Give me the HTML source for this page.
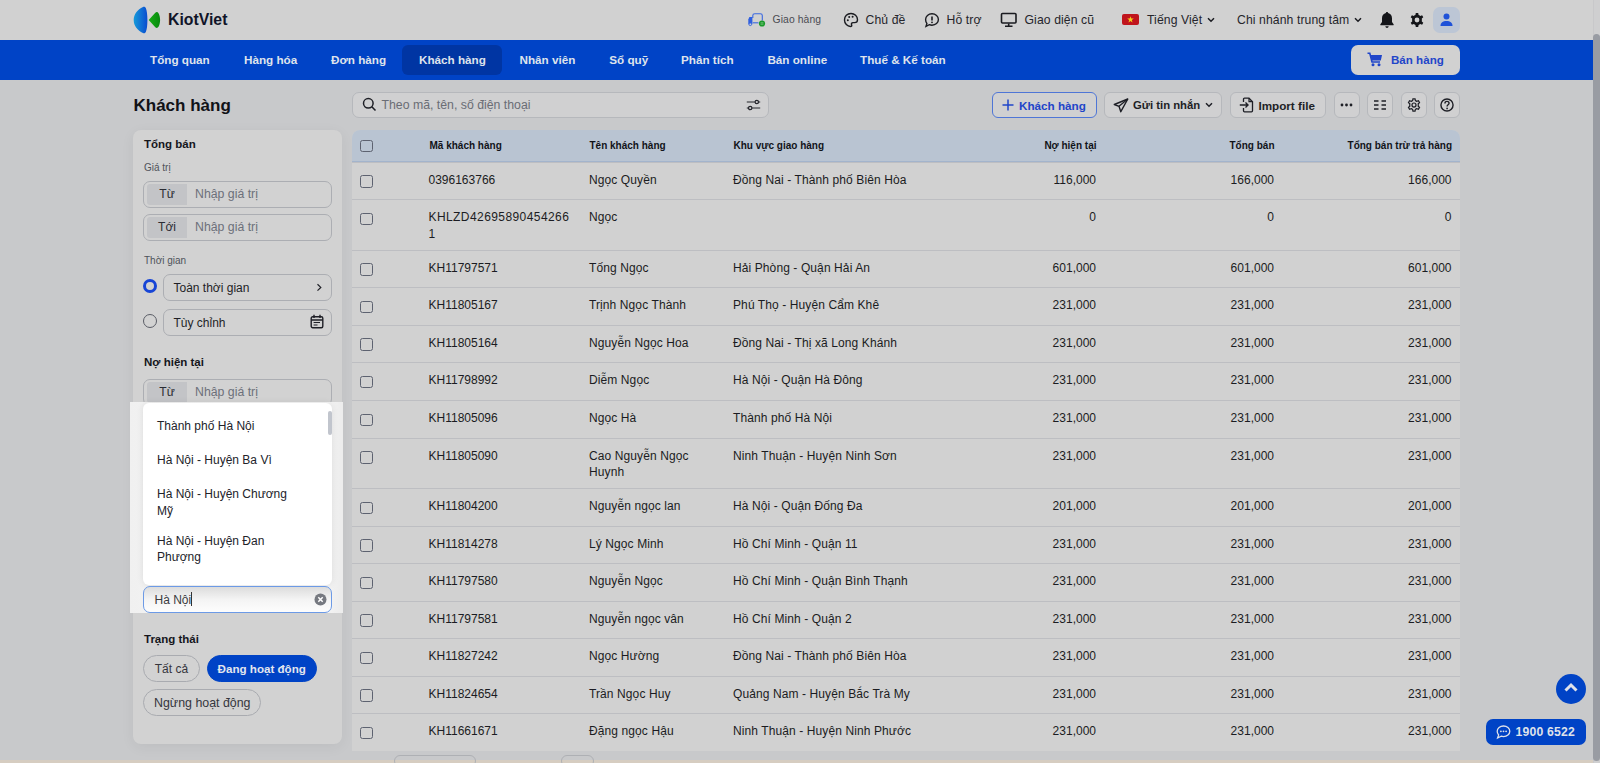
<!DOCTYPE html>
<html><head><meta charset="utf-8">
<style>
*{box-sizing:border-box;margin:0;padding:0}
html,body{width:1600px;height:763px;overflow:hidden}
body{background:#c8c9cb;font-family:"Liberation Sans",sans-serif;color:#1b1b22;position:relative}
.a{position:absolute;white-space:nowrap}
svg.a{overflow:visible}
#top{left:0;top:0;width:1593px;height:40px;background:#d1d1d1}
#nav{left:0;top:40px;width:1593px;height:40px;background:#0043c6}
.nv{position:absolute;top:40px;height:40px;line-height:40px;color:#dfe3ec;font-weight:700;font-size:11.7px;white-space:nowrap}
#act{left:402px;top:45px;width:100px;height:30px;background:#0035a3;border-radius:6px}
#sb{left:1593px;top:0;width:7px;height:763px;background:#cfcfd0;border-left:1px solid #c8c8ca}
#thumb{left:1593px;top:34px;width:7px;height:727px;background:#999ca3;border-radius:4px}
#btm{left:0;top:760px;width:1593px;height:3px;background:#d6cdc1}
.tb{font-size:12.2px;color:#25252b;top:13px;letter-spacing:0.1px}
/* title row */
.btn{position:absolute;top:92px;height:26px;border:1px solid #b6b8bc;border-radius:6px;background:#d0d0d1}
.btxt{position:absolute;top:99px;font-size:12px;font-weight:700;color:#1e1f26;white-space:nowrap}
/* left panel */
#panel{left:133px;top:130px;width:209px;height:614px;background:#d2d2d2;border-radius:8px;box-shadow:0 3px 14px rgba(0,0,0,0.055)}
.ph{position:absolute;font-size:11.5px;font-weight:700;color:#15161c;white-space:nowrap}
.pl{position:absolute;font-size:10px;color:#4f525a;white-space:nowrap}
.inp{position:absolute;left:143px;width:189px;height:27px;border:1px solid #acaeb3;border-radius:7px;background:#d2d2d2}
.lab{position:absolute;left:3px;top:2px;width:40px;height:21px;background:#c3c4c7;border-radius:3px 0 0 3px;font-size:12px;color:#2b2c33;text-align:center;line-height:21px}
.ph2{position:absolute;left:51px;top:0;line-height:25px;font-size:12.3px;color:#6c707a;white-space:nowrap}
.sel{position:absolute;left:162.5px;width:169.5px;height:27px;border:1px solid #acaeb3;border-radius:7px;background:#d2d2d2}
.sel span{position:absolute;left:10px;top:0;line-height:26px;font-size:12px;color:#1e1f26}
.rad{position:absolute;left:143px;width:14px;height:14px;border-radius:50%}
.pill{position:absolute;height:27px;border:1px solid #a9abb0;border-radius:14px;font-size:12px;color:#35363d;line-height:26px;text-align:center;white-space:nowrap}
/* table */
#tbl{left:352px;top:130px;width:1108px;height:621px;background:#d1d1d1;border-radius:8px 8px 0 0;overflow:hidden}
#thead{left:352px;top:130px;width:1108px;height:32px;background:#b9c4d2;border-radius:8px 8px 0 0;border-bottom:1.5px solid #a3b4cc}
.th{position:absolute;top:140px;font-size:10px;font-weight:700;color:#111319;white-space:nowrap}
.tr{position:absolute;left:352px;width:1108px;border-top:1px solid #bdbec2}
.tr:first-of-type{border-top:none}
.tr div{position:absolute;top:9px;font-size:12px;line-height:16.5px;color:#1b1c22;white-space:nowrap}
.cb{position:absolute;left:8px;top:12.5px;width:12.5px;height:12.5px;border:1.4px solid #5d6270;border-radius:2.5px}
.c1{left:76.5px}.c2{left:237px;letter-spacing:0.1px}.c3{left:381px;letter-spacing:0.1px}
.c4{right:364px;text-align:right}.c5{right:186px;text-align:right}.c6{right:8.5px;text-align:right}
/* highlight */
#hl{left:129.5px;top:401.6px;width:213px;height:211.2px;background:linear-gradient(90deg,#f0f0f0,#f6f6f6 40%,#f6f6f6 90%,#ececec)}
#dd{left:143px;top:402.6px;width:189px;height:182px;background:#fff;border-radius:6px;box-shadow:0 0 7px rgba(0,0,0,0.09)}
.di{position:absolute;left:157px;font-size:12px;line-height:16.5px;color:#22232a;white-space:nowrap}
#hn{left:143px;top:585.5px;width:189px;height:27px;border:1px solid #6c9ae6;border-radius:7px;background:linear-gradient(#dcdcdc,#f4f4f4 50%,#fdfdfd)}

</style></head><body>
<div id="top" class="a"></div>
<div id="nav" class="a"></div>
<div id="act" class="a"></div>
<div id="sb" class="a"></div>
<div id="thumb" class="a"></div>
<div id="btm" class="a"></div>

<!-- logo -->
<svg class="a" style="left:128px;top:2px" width="40" height="36" viewBox="0 0 40 36">
 <defs><linearGradient id="lg" x1="0" y1="0" x2="1" y2="0"><stop offset="0" stop-color="#159ad9"/><stop offset="1" stop-color="#0a4cd0"/></linearGradient>
 <linearGradient id="lg2" x1="0" y1="0" x2="1" y2="0"><stop offset="0" stop-color="#16ad14"/><stop offset="1" stop-color="#08880e"/></linearGradient></defs>
 <path d="M15 4.9 C16 4.4 17.2 4.8 17.8 6 C18.9 8.5 19.4 12.5 19.4 18 C19.4 23.5 18.9 27.5 17.8 30 C17.2 31.2 16 31.5 15 31 C9.5 28.5 5.7 24 5.7 18 C5.7 12 9.5 7.5 15 4.9 Z" fill="url(#lg)"/>
 <path d="M20.7 18 L27.3 10.8 C28.3 9.7 29.8 9.9 30.5 11.2 C31.6 13.2 32.1 15.6 32.1 18 C32.1 20.4 31.6 22.8 30.5 24.8 C29.8 26.1 28.3 26.3 27.3 25.2 Z" fill="url(#lg2)"/>
</svg>
<div class="a" style="left:168px;top:11.4px;font-size:15.8px;font-weight:700;color:#101428">KiotViet</div>

<!-- top right -->
<svg class="a" style="left:747px;top:12px" width="20" height="16" viewBox="0 0 20 16">
 <path d="M5.8 6 V3.5 C5.8 2.3 6.6 1.8 7.8 1.8 H13.3 C14.5 1.8 15.3 2.3 15.3 3.5 V8.5" fill="none" stroke="#3a68e0" stroke-width="1.1"/>
 <path d="M5.8 10.8 H11.5" fill="none" stroke="#3a68e0" stroke-width="1.1"/>
 <path d="M1.3 7.6 L2.4 4.9 H5.4 V12.2 H1.3 Z" fill="#2f5fe0"/>
 <circle cx="3.3" cy="12.3" r="1.3" fill="#d1d1d1" stroke="#2f5fe0" stroke-width="0.9"/>
 <circle cx="15" cy="11.5" r="3.1" fill="#1a9a2a"/>
 <path d="M13.6 10.8 H16.4 M13.6 12.2 H16.4" stroke="#8fcf94" stroke-width="0.7"/>
</svg>
<div class="a tb" style="left:772.5px;top:14px;font-size:10.35px;color:#4a4b52">Giao hàng</div>

<svg class="a" style="left:843px;top:12px" width="16" height="16" viewBox="0 0 16 16">
 <path d="M8 1.5 C4.2 1.5 1.5 4.3 1.5 8 C1.5 11.6 4.3 14.5 7.5 14.5 C8.6 14.5 9 13.8 8.6 12.9 C8.1 11.8 8.6 10.6 10 10.6 H11.6 C13.3 10.6 14.5 9.4 14.5 7.7 C14.5 4.2 11.6 1.5 8 1.5 Z" fill="none" stroke="#1a1b20" stroke-width="1.4"/>
 <circle cx="4.8" cy="8.2" r="1" fill="#1a1b20"/><circle cx="6.2" cy="5" r="1" fill="#1a1b20"/><circle cx="9.6" cy="4.8" r="1" fill="#1a1b20"/>
</svg>
<div class="a tb" style="left:865.5px">Chủ đề</div>

<svg class="a" style="left:924px;top:12px" width="16" height="16" viewBox="0 0 16 16">
 <path d="M8 1.8 C11.6 1.8 14.4 4.3 14.4 7.5 C14.4 10.7 11.6 13.2 8 13.2 C7 13.2 6.1 13 5.3 12.7 L2 14.3 L2.9 11.4 C2 10.3 1.6 9 1.6 7.5 C1.6 4.3 4.4 1.8 8 1.8 Z" fill="none" stroke="#1a1b20" stroke-width="1.4"/>
 <path d="M8 4.6 V8.4" stroke="#1a1b20" stroke-width="1.6"/><circle cx="8" cy="10.3" r="0.9" fill="#1a1b20"/>
</svg>
<div class="a tb" style="left:946.5px">Hỗ trợ</div>

<svg class="a" style="left:1000px;top:12px" width="18" height="16" viewBox="0 0 18 16">
 <rect x="1.5" y="1.5" width="14.5" height="9.5" rx="1" fill="none" stroke="#1a1b20" stroke-width="1.6"/>
 <path d="M8.7 11.5 V13.5 M5 14.2 H12.5" stroke="#1a1b20" stroke-width="1.6"/>
</svg>
<div class="a tb" style="left:1024.5px">Giao diện cũ</div>

<svg class="a" style="left:1122px;top:14px" width="17" height="11" viewBox="0 0 17 11">
 <rect x="0" y="0" width="17" height="11" rx="2" fill="#c0141c"/>
 <path d="M8.5 2.2 L9.3 4.6 H11.8 L9.8 6.1 L10.5 8.5 L8.5 7 L6.5 8.5 L7.2 6.1 L5.2 4.6 H7.7 Z" fill="#f3d01c"/>
</svg>
<div class="a tb" style="left:1147px">Tiếng Việt</div>
<svg class="a" style="left:1207px;top:17px" width="8" height="6" viewBox="0 0 8 6"><path d="M1 1.2 L4 4.2 L7 1.2" fill="none" stroke="#1a1b20" stroke-width="1.5"/></svg>

<div class="a tb" style="left:1237px">Chi nhánh trung tâm</div>
<svg class="a" style="left:1354px;top:17px" width="8" height="6" viewBox="0 0 8 6"><path d="M1 1.2 L4 4.2 L7 1.2" fill="none" stroke="#1a1b20" stroke-width="1.5"/></svg>

<svg class="a" style="left:1379px;top:11px" width="16" height="18" viewBox="0 0 16 18">
 <path d="M8 1 C8.7 1 9.1 1.5 9.1 2.1 C11.5 2.6 13 4.6 13 7.2 V11 L14.6 13.2 C14.9 13.6 14.6 14.2 14.1 14.2 H1.9 C1.4 14.2 1.1 13.6 1.4 13.2 L3 11 V7.2 C3 4.6 4.5 2.6 6.9 2.1 C6.9 1.5 7.3 1 8 1 Z" fill="#141519"/>
 <path d="M6.3 15.2 C6.5 16.3 7.2 16.9 8 16.9 C8.8 16.9 9.5 16.3 9.7 15.2 Z" fill="#141519"/>
</svg>
<svg class="a" style="left:1409px;top:12px" width="16" height="16" viewBox="0 0 16 16">
 <path fill="#141519" d="M6.8 1 H9.2 L9.6 3 C10.2 3.2 10.7 3.5 11.2 3.9 L13.1 3.2 L14.3 5.3 L12.8 6.6 C12.9 7.2 12.9 8.8 12.8 9.4 L14.3 10.7 L13.1 12.8 L11.2 12.1 C10.7 12.5 10.2 12.8 9.6 13 L9.2 15 H6.8 L6.4 13 C5.8 12.8 5.3 12.5 4.8 12.1 L2.9 12.8 L1.7 10.7 L3.2 9.4 C3.1 8.8 3.1 7.2 3.2 6.6 L1.7 5.3 L2.9 3.2 L4.8 3.9 C5.3 3.5 5.8 3.2 6.4 3 Z M8 5.6 A2.4 2.4 0 1 0 8 10.4 A2.4 2.4 0 1 0 8 5.6 Z"/>
</svg>
<div class="a" style="left:1433px;top:7px;width:26.5px;height:26px;border-radius:7px;background:#bcc6d5"></div>
<svg class="a" style="left:1439px;top:13px" width="15" height="14" viewBox="0 0 15 14">
 <circle cx="7.5" cy="3.6" r="3" fill="#1f52d8"/>
 <path d="M1.5 13 C1.5 9.6 3.8 8 7.5 8 C11.2 8 13.5 9.6 13.5 13 Z" fill="#1f52d8"/>
</svg>

<!-- nav -->
<div class="nv" style="left:150px">Tổng quan</div>
<div class="nv" style="left:244px">Hàng hóa</div>
<div class="nv" style="left:331px">Đơn hàng</div>
<div class="nv" style="left:419px">Khách hàng</div>
<div class="nv" style="left:519.5px">Nhân viên</div>
<div class="nv" style="left:609.3px">Sổ quỹ</div>
<div class="nv" style="left:681px">Phân tích</div>
<div class="nv" style="left:767.4px">Bán online</div>
<div class="nv" style="left:860px">Thuế &amp; Kế toán</div>

<div class="a" style="left:1351px;top:45px;width:109px;height:30px;border-radius:7px;background:#d1d1d1"></div>
<svg class="a" style="left:1367px;top:52px" width="16" height="15" viewBox="0 0 16 15">
 <path d="M0.5 1.2 H2.8 L5 10 H13" fill="none" stroke="#1f45c9" stroke-width="1.6"/>
 <path d="M3.4 3 H15 L13.8 8.6 H4.6 Z" fill="#1f45c9"/>
 <circle cx="6" cy="12.8" r="1.5" fill="#1f45c9"/><circle cx="12" cy="12.8" r="1.5" fill="#1f45c9"/>
</svg>
<div class="a" style="left:1391px;top:53px;font-size:11.6px;font-weight:700;color:#1f45c9">Bán hàng</div>

<!-- title row -->
<div class="a" style="left:133.5px;top:95.7px;font-size:17px;font-weight:700;color:#111217">Khách hàng</div>
<div class="a" style="left:352px;top:91.5px;width:416.5px;height:26.5px;border:1px solid #b6b8bc;border-radius:7px;background:#d0d0d1"></div>
<svg class="a" style="left:362px;top:97px" width="15" height="15" viewBox="0 0 15 15">
 <circle cx="6.3" cy="6.3" r="4.8" fill="none" stroke="#1e1f26" stroke-width="1.5"/>
 <path d="M9.8 9.8 L13.5 13.5" stroke="#1e1f26" stroke-width="1.6"/>
</svg>
<div class="a" style="left:381.5px;top:98px;font-size:12.3px;color:#6a6d75">Theo mã, tên, số điện thoại</div>
<svg class="a" style="left:746px;top:99px" width="15" height="12" viewBox="0 0 15 12">
 <path d="M0.8 3 H14.2 M0.8 9 H14.2" stroke="#25262c" stroke-width="1.2"/>
 <circle cx="10.8" cy="3" r="1.7" fill="#d0d0d1" stroke="#25262c" stroke-width="1.2"/>
 <circle cx="4.2" cy="9" r="1.7" fill="#d0d0d1" stroke="#25262c" stroke-width="1.2"/>
</svg>

<div class="btn" style="left:991.8px;width:105.5px;border-color:#4f76d6;border-width:1.2px"></div>
<svg class="a" style="left:1002px;top:99px" width="12" height="12" viewBox="0 0 12 12"><path d="M6 0.5 V11.5 M0.5 6 H11.5" stroke="#1f45c9" stroke-width="1.5"/></svg>
<div class="btxt" style="left:1019px;color:#1f45c9;font-size:11.7px">Khách hàng</div>

<div class="btn" style="left:1103.5px;width:118.5px"></div>
<svg class="a" style="left:1113px;top:98px" width="16" height="15" viewBox="0 0 16 15">
 <path d="M14.8 1 L1.3 6.5 L6 8.3 L7.8 13.7 Z" fill="none" stroke="#1e1f26" stroke-width="1.4" stroke-linejoin="round"/>
 <path d="M6 8.3 L14.8 1" stroke="#1e1f26" stroke-width="1.3"/>
</svg>
<div class="btxt" style="left:1133px;font-size:11.3px">Gửi tin nhắn</div>
<svg class="a" style="left:1205px;top:102px" width="8" height="6" viewBox="0 0 8 6"><path d="M1 1.2 L4 4.2 L7 1.2" fill="none" stroke="#1e1f26" stroke-width="1.5"/></svg>

<div class="btn" style="left:1229.5px;width:96.5px"></div>
<svg class="a" style="left:1239px;top:97px" width="15" height="16" viewBox="0 0 15 16">
 <path d="M4.5 5 V2.2 C4.5 1.6 4.9 1.2 5.5 1.2 H10 L13.5 4.7 V13.8 C13.5 14.4 13.1 14.8 12.5 14.8 H5.5 C4.9 14.8 4.5 14.4 4.5 13.8 V11" fill="none" stroke="#1e1f26" stroke-width="1.3"/>
 <path d="M10 1.2 V4.7 H13.5" fill="none" stroke="#1e1f26" stroke-width="1.2"/>
 <path d="M0.8 8 H9 M6.5 5.5 L9 8 L6.5 10.5" fill="none" stroke="#1e1f26" stroke-width="1.4"/>
</svg>
<div class="btxt" style="left:1258.4px;font-size:11.7px;top:98.6px">Import file</div>

<div class="btn" style="left:1333.5px;width:26px"></div>
<svg class="a" style="left:1340px;top:103px" width="13" height="4" viewBox="0 0 13 4"><circle cx="2" cy="2" r="1.4" fill="#1e1f26"/><circle cx="6.5" cy="2" r="1.4" fill="#1e1f26"/><circle cx="11" cy="2" r="1.4" fill="#1e1f26"/></svg>
<div class="btn" style="left:1367px;width:26px"></div>
<svg class="a" style="left:1373px;top:99px" width="14" height="13" viewBox="0 0 14 13">
 <path d="M1 2 H5.5 M8.5 2 H13 M1 6 H5.5 M8.5 6 H13 M1 10 H5.5 M8.5 10 H13" stroke="#1e1f26" stroke-width="1.5"/>
</svg>
<div class="btn" style="left:1400.5px;width:26px"></div>
<svg class="a" style="left:1406.5px;top:97.5px" width="14" height="14" viewBox="0 0 16 16">
 <path fill="none" stroke="#1e1f26" stroke-width="1.4" d="M6.8 1 H9.2 L9.6 3 C10.2 3.2 10.7 3.5 11.2 3.9 L13.1 3.2 L14.3 5.3 L12.8 6.6 C12.9 7.2 12.9 8.8 12.8 9.4 L14.3 10.7 L13.1 12.8 L11.2 12.1 C10.7 12.5 10.2 12.8 9.6 13 L9.2 15 H6.8 L6.4 13 C5.8 12.8 5.3 12.5 4.8 12.1 L2.9 12.8 L1.7 10.7 L3.2 9.4 C3.1 8.8 3.1 7.2 3.2 6.6 L1.7 5.3 L2.9 3.2 L4.8 3.9 C5.3 3.5 5.8 3.2 6.4 3 Z"/>
 <circle cx="8" cy="8" r="2.3" fill="none" stroke="#1e1f26" stroke-width="1.4"/>
</svg>
<div class="btn" style="left:1433.5px;width:26px"></div>
<svg class="a" style="left:1439.5px;top:97.5px" width="14" height="14" viewBox="0 0 15 15">
 <circle cx="7.5" cy="7.5" r="6.5" fill="none" stroke="#1e1f26" stroke-width="1.5"/>
 <path d="M5.3 5.8 C5.3 4.4 6.3 3.6 7.5 3.6 C8.8 3.6 9.7 4.4 9.7 5.6 C9.7 7.2 7.6 7.3 7.6 9" fill="none" stroke="#1e1f26" stroke-width="1.5"/>
 <circle cx="7.6" cy="11.2" r="0.9" fill="#1e1f26"/>
</svg>

<!-- left panel -->
<div id="panel" class="a"></div>
<div class="ph" style="left:144px;top:138px">Tổng bán</div>
<div class="pl" style="left:144px;top:162px">Giá trị</div>
<div class="inp" style="top:181px"><div class="lab">Từ</div><div class="ph2">Nhập giá trị</div></div>
<div class="inp" style="top:214px"><div class="lab">Tới</div><div class="ph2">Nhập giá trị</div></div>
<div class="pl" style="left:144px;top:255px">Thời gian</div>
<div class="rad" style="top:278.5px;border:3.6px solid #1745d6"></div>
<div class="sel" style="top:274px"><span>Toàn thời gian</span></div>
<svg class="a" style="left:316px;top:283px" width="7" height="9" viewBox="0 0 7 9"><path d="M1.5 1.2 L4.8 4.4 L1.5 7.6" fill="none" stroke="#1e1f26" stroke-width="1.2"/></svg>
<div class="rad" style="top:314px;border:1px solid #5a5d66"></div>
<div class="sel" style="top:309px"><span>Tùy chỉnh</span></div>
<svg class="a" style="left:310px;top:314px" width="14" height="15" viewBox="0 0 14 15">
 <rect x="1.2" y="2.8" width="11.6" height="11" rx="1.5" fill="none" stroke="#1e1f26" stroke-width="1.4"/>
 <path d="M4 0.8 V4 M10 0.8 V4 M1.2 6 H12.8" stroke="#1e1f26" stroke-width="1.4"/>
 <path d="M3.6 8.5 H10 M3.6 11 H7.5" stroke="#1e1f26" stroke-width="1.2"/>
</svg>
<div class="ph" style="left:144px;top:356px">Nợ hiện tại</div>
<div class="inp" style="top:379px"><div class="lab">Từ</div><div class="ph2">Nhập giá trị</div></div>

<div class="ph" style="left:144px;top:632.5px">Trạng thái</div>
<div class="pill" style="left:143.2px;top:655.4px;width:56.5px">Tất cả</div>
<div class="pill" style="left:206.9px;top:655.4px;width:109.7px;background:#0043c6;border-color:#0043c6;color:#e3e6ee;font-weight:700;font-size:11.6px">Đang hoạt động</div>
<div class="pill" style="left:143.2px;top:689.2px;width:118.2px;font-size:12.4px">Ngừng hoạt động</div>

<!-- table -->
<div id="tbl" class="a"></div>
<div id="thead" class="a"></div>
<i class="cb a" style="left:360px;top:139.5px"></i>
<div class="th" style="left:429.5px">Mã khách hàng</div>
<div class="th" style="left:589.5px">Tên khách hàng</div>
<div class="th" style="left:733.5px">Khu vực giao hàng</div>
<div class="th" style="right:503.5px">Nợ hiện tại</div>
<div class="th" style="right:325.5px">Tổng bán</div>
<div class="th" style="right:148px">Tổng bán trừ trả hàng</div>
<div class="tr" style="top:161.60px;height:37.52px"><i class="cb"></i><div class="c1">0396163766</div><div class="c2">Ngọc Quyền</div><div class="c3">Đồng Nai - Thành phố Biên Hòa</div><div class="c4">116,000</div><div class="c5">166,000</div><div class="c6">166,000</div></div>
<div class="tr" style="top:199.12px;height:50.80px"><i class="cb"></i><div class="c1"><span style="letter-spacing:0.42px">KHLZD42695890454266</span><br>1</div><div class="c2">Ngọc</div><div class="c3"></div><div class="c4">0</div><div class="c5">0</div><div class="c6">0</div></div>
<div class="tr" style="top:249.92px;height:37.52px"><i class="cb"></i><div class="c1">KH11797571</div><div class="c2">Tống Ngọc</div><div class="c3">Hải Phòng - Quận Hải An</div><div class="c4">601,000</div><div class="c5">601,000</div><div class="c6">601,000</div></div>
<div class="tr" style="top:287.44px;height:37.52px"><i class="cb"></i><div class="c1">KH11805167</div><div class="c2">Trịnh Ngọc Thành</div><div class="c3">Phú Thọ - Huyện Cẩm Khê</div><div class="c4">231,000</div><div class="c5">231,000</div><div class="c6">231,000</div></div>
<div class="tr" style="top:324.96px;height:37.52px"><i class="cb"></i><div class="c1">KH11805164</div><div class="c2">Nguyễn Ngọc Hoa</div><div class="c3">Đồng Nai - Thị xã Long Khánh</div><div class="c4">231,000</div><div class="c5">231,000</div><div class="c6">231,000</div></div>
<div class="tr" style="top:362.48px;height:37.52px"><i class="cb"></i><div class="c1">KH11798992</div><div class="c2">Diễm Ngọc</div><div class="c3">Hà Nội - Quận Hà Đông</div><div class="c4">231,000</div><div class="c5">231,000</div><div class="c6">231,000</div></div>
<div class="tr" style="top:400.00px;height:37.52px"><i class="cb"></i><div class="c1">KH11805096</div><div class="c2">Ngọc Hà</div><div class="c3">Thành phố Hà Nội</div><div class="c4">231,000</div><div class="c5">231,000</div><div class="c6">231,000</div></div>
<div class="tr" style="top:437.52px;height:50.80px"><i class="cb"></i><div class="c1">KH11805090</div><div class="c2">Cao Nguyễn Ngọc<br>Huynh</div><div class="c3">Ninh Thuận - Huyện Ninh Sơn</div><div class="c4">231,000</div><div class="c5">231,000</div><div class="c6">231,000</div></div>
<div class="tr" style="top:488.32px;height:37.52px"><i class="cb"></i><div class="c1">KH11804200</div><div class="c2">Nguyễn ngọc lan</div><div class="c3">Hà Nội - Quận Đống Đa</div><div class="c4">201,000</div><div class="c5">201,000</div><div class="c6">201,000</div></div>
<div class="tr" style="top:525.84px;height:37.52px"><i class="cb"></i><div class="c1">KH11814278</div><div class="c2">Lý Ngọc Minh</div><div class="c3">Hồ Chí Minh - Quận 11</div><div class="c4">231,000</div><div class="c5">231,000</div><div class="c6">231,000</div></div>
<div class="tr" style="top:563.36px;height:37.52px"><i class="cb"></i><div class="c1">KH11797580</div><div class="c2">Nguyễn Ngọc</div><div class="c3">Hồ Chí Minh - Quận Bình Thạnh</div><div class="c4">231,000</div><div class="c5">231,000</div><div class="c6">231,000</div></div>
<div class="tr" style="top:600.88px;height:37.52px"><i class="cb"></i><div class="c1">KH11797581</div><div class="c2">Nguyễn ngọc vân</div><div class="c3">Hồ Chí Minh - Quận 2</div><div class="c4">231,000</div><div class="c5">231,000</div><div class="c6">231,000</div></div>
<div class="tr" style="top:638.40px;height:37.52px"><i class="cb"></i><div class="c1">KH11827242</div><div class="c2">Ngọc Hường</div><div class="c3">Đồng Nai - Thành phố Biên Hòa</div><div class="c4">231,000</div><div class="c5">231,000</div><div class="c6">231,000</div></div>
<div class="tr" style="top:675.92px;height:37.52px"><i class="cb"></i><div class="c1">KH11824654</div><div class="c2">Trần Ngọc Huy</div><div class="c3">Quảng Nam - Huyện Bắc Trà My</div><div class="c4">231,000</div><div class="c5">231,000</div><div class="c6">231,000</div></div>
<div class="tr" style="top:713.44px;height:37.52px"><i class="cb"></i><div class="c1">KH11661671</div><div class="c2">Đặng ngọc Hậu</div><div class="c3">Ninh Thuận - Huyện Ninh Phước</div><div class="c4">231,000</div><div class="c5">231,000</div><div class="c6">231,000</div></div>

<!-- pagination peek -->
<div class="a" style="left:394px;top:755px;width:82px;height:12px;border:1px solid #aeb0b4;border-radius:6px"></div>
<div class="a" style="left:561px;top:755px;width:33px;height:12px;border:1px solid #aeb0b4;border-radius:6px"></div>

<!-- highlight + dropdown -->
<div id="hl" class="a"></div>
<div id="dd" class="a"></div>
<div class="a" style="left:328.2px;top:410.7px;width:3.6px;height:24px;border-radius:2px;background:#c1c5cd"></div>
<div class="di" style="top:418px">Thành phố Hà Nội</div>
<div class="di" style="top:451.5px">Hà Nội - Huyện Ba Vì</div>
<div class="di" style="top:486px">Hà Nội - Huyện Chương<br>Mỹ</div>
<div class="di" style="top:532.5px">Hà Nội - Huyện Đan<br>Phượng</div>
<div id="hn" class="a"></div>
<div class="a" style="left:154.5px;top:591.5px;font-size:12px;color:#3a3b40">Hà Nội<span style="display:inline-block;width:0.8px;height:14px;background:#333;vertical-align:-2px;margin-left:0.3px"></span></div>
<svg class="a" style="left:313.5px;top:592.5px" width="13" height="13" viewBox="0 0 13 13">
 <circle cx="6.5" cy="6.5" r="6" fill="#767980"/>
 <path d="M4.3 4.3 L8.7 8.7 M8.7 4.3 L4.3 8.7" stroke="#fff" stroke-width="1.5"/>
</svg>

<!-- floating -->
<div class="a" style="left:1556px;top:674px;width:30px;height:30px;border-radius:50%;background:#0043c6"></div>
<svg class="a" style="left:1563px;top:681px" width="16" height="12" viewBox="0 0 16 12"><path d="M2.5 9.5 L8 4 L13.5 9.5" fill="none" stroke="#dfe2ea" stroke-width="3"/></svg>
<div class="a" style="left:1486px;top:719px;width:100px;height:26px;border-radius:7px;background:#0043c6"></div>
<svg class="a" style="left:1496px;top:725px" width="15" height="14" viewBox="0 0 15 14">
 <path d="M7.5 1 C11 1 13.8 3.3 13.8 6.3 C13.8 9.3 11 11.6 7.5 11.6 C6.7 11.6 5.9 11.5 5.2 11.2 L1.6 13 L2.6 10 C1.7 9 1.2 7.7 1.2 6.3 C1.2 3.3 4 1 7.5 1 Z" fill="none" stroke="#dfe2ea" stroke-width="1.3"/>
 <circle cx="4.9" cy="6.3" r="0.9" fill="#dfe2ea"/><circle cx="7.5" cy="6.3" r="0.9" fill="#dfe2ea"/><circle cx="10.1" cy="6.3" r="0.9" fill="#dfe2ea"/>
</svg>
<div class="a" style="left:1515.5px;top:725px;font-size:12.2px;font-weight:700;color:#dfe2ea;letter-spacing:0.2px">1900 6522</div>

</body></html>
